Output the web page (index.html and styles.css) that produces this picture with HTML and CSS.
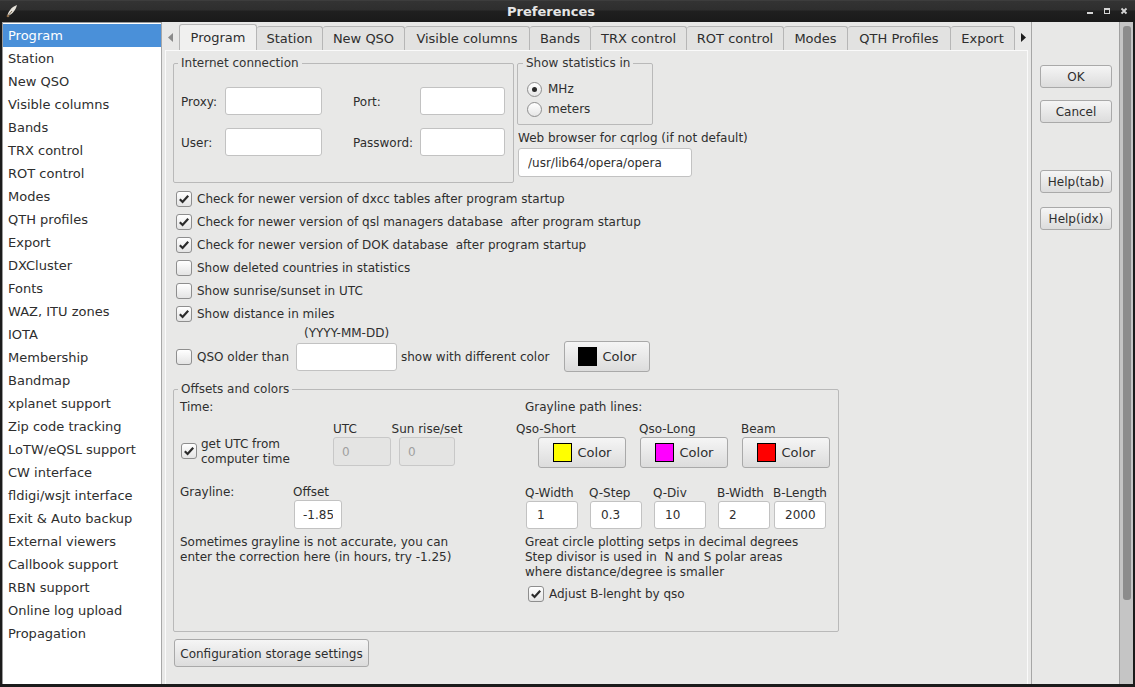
FILE: index.html
```html
<!DOCTYPE html>
<html>
<head>
<meta charset="utf-8">
<title>Preferences</title>
<link rel="stylesheet" href="styles.css">
</head>
<body>
<div class="window">
  <div class="titlebar">
    <div class="tb-icon">
      <svg width="16" height="16" viewBox="0 0 16 16"><path d="M3 14 C4 9 7 4 13 2 C12 6 9 11 4 13 Z" fill="#e6e2da"/><path d="M3 14 L8 8" stroke="#7a6a55" stroke-width="1"/><circle cx="4" cy="13" r="1.3" fill="#8b6b4a"/></svg>
    </div>
    <div class="tb-title">Preferences</div>
    <svg class="tb-controls" width="55" height="22" viewBox="0 0 55 22">
      <rect x="7" y="12" width="6" height="2" fill="#d4d4d4"/>
      <rect x="24.5" y="8.5" width="5" height="5" fill="none" stroke="#d4d4d4" stroke-width="1"/>
      <rect x="24" y="8" width="6" height="2" fill="#d4d4d4"/>
      <path d="M41.5 8.5 L46.5 13.5 M46.5 8.5 L41.5 13.5" stroke="#d4d4d4" stroke-width="1.8"/>
    </svg>
  </div>
  <div class="client">
    <ul class="sidebar">
      <li class="sel">Program</li>
      <li>Station</li>
      <li>New QSO</li>
      <li>Visible columns</li>
      <li>Bands</li>
      <li>TRX control</li>
      <li>ROT control</li>
      <li>Modes</li>
      <li>QTH profiles</li>
      <li>Export</li>
      <li>DXCluster</li>
      <li>Fonts</li>
      <li>WAZ, ITU zones</li>
      <li>IOTA</li>
      <li>Membership</li>
      <li>Bandmap</li>
      <li>xplanet support</li>
      <li>Zip code tracking</li>
      <li>LoTW/eQSL support</li>
      <li>CW interface</li>
      <li>fldigi/wsjt interface</li>
      <li>Exit &amp; Auto backup</li>
      <li>External viewers</li>
      <li>Callbook support</li>
      <li>RBN support</li>
      <li>Online log upload</li>
      <li>Propagation</li>
    </ul>
    <div class="main">
      <div class="tabbar">
        <div class="tab-arrow left"><svg width="5" height="9" viewBox="0 0 5 9"><path d="M5 0 L0 4.5 L5 9 Z" fill="#8a8a8a"/></svg></div>
        <div class="tabs">
          <div class="tab active">Program</div>
          <div class="tab">Station</div>
          <div class="tab">New QSO</div>
          <div class="tab">Visible columns</div>
          <div class="tab">Bands</div>
          <div class="tab">TRX control</div>
          <div class="tab">ROT control</div>
          <div class="tab">Modes</div>
          <div class="tab">QTH Profiles</div>
          <div class="tab">Export</div>
        </div>
        <div class="tab-arrow right"><svg width="5" height="9" viewBox="0 0 5 9"><path d="M0 0 L5 4.5 L0 9 Z" fill="#1e1e1e"/></svg></div>
      </div>
      <div class="panel">
        <div class="row-top">
          <fieldset class="group g-inet">
            <legend>Internet connection</legend>
            <div class="inet-grid">
              <span class="lbl">Proxy:</span><input class="field" type="text">
              <span class="lbl c4">Port:</span><input class="field" type="text">
              <span class="lbl">User:</span><input class="field" type="text">
              <span class="lbl c4">Password:</span><input class="field" type="text">
            </div>
          </fieldset>
          <div class="col-stats">
            <fieldset class="group g-stats">
              <legend>Show statistics in</legend>
              <div class="radio-row"><span class="radio on"></span>MHz</div>
              <div class="radio-row"><span class="radio"></span>meters</div>
            </fieldset>
            <div class="browser-lbl">Web browser for cqrlog (if not default)</div>
            <input class="field browser" type="text" value="/usr/lib64/opera/opera">
          </div>
        </div>

        <div class="checks">
          <div class="chk-row"><span class="chk on"><svg width="16" height="16" viewBox="0 0 16 16"><path d="M3.8 8.2 L6.6 11 L12.2 4.8" fill="none" stroke="#2b2b2b" stroke-width="2.2"/></svg></span>Check for newer version of dxcc tables after program startup</div>
          <div class="chk-row"><span class="chk on"><svg width="16" height="16" viewBox="0 0 16 16"><path d="M3.8 8.2 L6.6 11 L12.2 4.8" fill="none" stroke="#2b2b2b" stroke-width="2.2"/></svg></span>Check for newer version of qsl managers database&nbsp; after program startup</div>
          <div class="chk-row"><span class="chk on"><svg width="16" height="16" viewBox="0 0 16 16"><path d="M3.8 8.2 L6.6 11 L12.2 4.8" fill="none" stroke="#2b2b2b" stroke-width="2.2"/></svg></span>Check for newer version of DOK database&nbsp; after program startup</div>
          <div class="chk-row"><span class="chk"></span>Show deleted countries in statistics</div>
          <div class="chk-row"><span class="chk"></span>Show sunrise/sunset in UTC</div>
          <div class="chk-row"><span class="chk on"><svg width="16" height="16" viewBox="0 0 16 16"><path d="M3.8 8.2 L6.6 11 L12.2 4.8" fill="none" stroke="#2b2b2b" stroke-width="2.2"/></svg></span>Show distance in miles</div>
        </div>

        <div class="date-lbl">(YYYY-MM-DD)</div>
        <div class="qso-row">
          <span class="chk"></span>
          <span class="qso-txt">QSO older than</span>
          <input class="field qso-date" type="text">
          <span class="qso-txt2">show with different color</span>
          <div class="btn color-btn big"><span class="sw black"></span>Color</div>
        </div>

        <fieldset class="group g-offsets">
          <legend>Offsets and colors</legend>
          <div class="off-inner">
            <div class="off-left">
              <div class="line">Time:</div>
              <div class="time-row">
                <div class="utc-chk">
                  <span class="chk on"><svg width="16" height="16" viewBox="0 0 16 16"><path d="M3.8 8.2 L6.6 11 L12.2 4.8" fill="none" stroke="#2b2b2b" stroke-width="2.2"/></svg></span>
                  <div class="two-line">get UTC from<br>computer time</div>
                </div>
                <div class="col utc-col">
                  <div class="line">UTC</div>
                  <input class="field dis" type="text" value="0">
                </div>
                <div class="col sun-col">
                  <div class="line">Sun rise/set</div>
                  <input class="field dis" type="text" value="0">
                </div>
              </div>
              <div class="gray-row">
                <div class="line gray-lbl">Grayline:</div>
                <div class="col off-col">
                  <div class="line">Offset</div>
                  <input class="field" type="text" value="-1.85">
                </div>
              </div>
              <div class="note">Sometimes grayline is not accurate, you can<br>enter the correction here (in hours, try -1.25)</div>
            </div>
            <div class="off-right">
              <div class="line gpl">Grayline path lines:</div>
              <div class="color-row">
                <div class="col cr1">
                  <div class="line">Qso-Short</div>
                  <div class="btn color-btn"><span class="sw yellow"></span>Color</div>
                </div>
                <div class="col cr2">
                  <div class="line">Qso-Long</div>
                  <div class="btn color-btn"><span class="sw magenta"></span>Color</div>
                </div>
                <div class="col cr3">
                  <div class="line">Beam</div>
                  <div class="btn color-btn"><span class="sw red"></span>Color</div>
                </div>
              </div>
              <div class="q-row">
                <div class="col qc"><div class="line">Q-Width</div><input class="field q" type="text" value="1"></div>
                <div class="col qc"><div class="line">Q-Step</div><input class="field q" type="text" value="0.3"></div>
                <div class="col qc"><div class="line">Q-Div</div><input class="field q" type="text" value="10"></div>
                <div class="col qc narrow"><div class="line">B-Width</div><input class="field q" type="text" value="2"></div>
                <div class="col qc"><div class="line">B-Length</div><input class="field q" type="text" value="2000"></div>
              </div>
              <div class="note r-note">Great circle plotting setps in decimal degrees<br>Step divisor is used in&nbsp; N and S polar areas<br>where distance/degree is smaller</div>
              <div class="adj-row"><span class="chk on"><svg width="16" height="16" viewBox="0 0 16 16"><path d="M3.8 8.2 L6.6 11 L12.2 4.8" fill="none" stroke="#2b2b2b" stroke-width="2.2"/></svg></span>Adjust B-lenght by qso</div>
            </div>
          </div>
        </fieldset>

        <div class="btn cfg-btn">Configuration storage settings</div>
      </div>
    </div>
    <div class="actions">
      <div class="btn act">OK</div>
      <div class="btn act cancel">Cancel</div>
      <div class="btn act help1">Help(tab)</div>
      <div class="btn act help2">Help(idx)</div>
    </div>
    <div class="scroll"><div class="thumb"></div></div>
  </div>
</div>
</body>
</html>
```

FILE: styles.css
```css
* { box-sizing: border-box; }

body {
  margin: 0;
  background: #1b1b1b;
  font-family: "DejaVu Sans", "Liberation Sans", sans-serif;
  font-size: 12px;
  color: #2e2e2e;
}

.window {
  width: 1135px;
  height: 687px;
  display: flex;
  flex-direction: column;
  overflow: hidden;
}

/* title bar */
.titlebar {
  height: 22px;
  display: flex;
  align-items: center;
  background: linear-gradient(#474747 0, #333 1px, #2e2e2e 10px, #1f1f1f 11px, #1a1a1a 22px);
  color: #e6e6e6;
}
.tb-icon { width: 22px; padding-left: 4px; display: flex; align-items: center; }
.tb-title { flex: 1; text-align: center; font-weight: bold; font-size: 13px; }
.tb-controls { display: block; }

/* client */
.client {
  height: 662px;
  margin: 0 2px;
  display: flex;
}

.sidebar {
  width: 160px;
  margin: 0;
  padding: 1px 0 0;
  list-style: none;
  background: #fff;
  border-left: 1px solid #9a9a9a;
  border-top: 1px solid #9a9a9a;
  border-right: 1px solid #a8a8a8;
  font-size: 13px;
}
.sidebar li {
  height: 23px;
  line-height: 23px;
  padding-left: 5px;
  white-space: nowrap;
}
.sidebar li.sel { background: #4a90d9; color: #fff; }

.main {
  width: 869px;
  display: flex;
  flex-direction: column;
  padding-left: 1px;
  background: #e8e8e7;
}

.tabbar {
  height: 28px;
  padding-top: 2px;
  display: flex;
  align-items: flex-end;
  font-size: 13px;
}
.tab-arrow {
  width: 16px;
  height: 26px;
  display: flex;
  align-items: center;
}
.tab-arrow.left { padding-left: 5px; }
.tab-arrow.right { padding-left: 6px; }
.tab-arrow svg { display: block; }

.tabs {
  display: grid;
  grid-template-columns: 78px 66px 82px 125px 61px 96px 97px 64px 103px 64px;
  align-items: end;
}
.tab {
  height: 24px;
  line-height: 23px;
  text-align: center;
  white-space: nowrap;
  background: #e2e2e1;
  border-top: 1px solid #b6b6b6;
  border-right: 1px solid #b6b6b6;
  border-radius: 3px 3px 0 0;
}
.tab.active {
  height: 26px;
  line-height: 25px;
  background: #f0f0ef;
  border-left: 1px solid #b6b6b6;
}

.panel {
  flex: 1;
  margin: 0 3px 0 2px;
  border: 1px solid #fafafa;
  border-bottom: none;
  padding: 5px 0 0 7px;
  display: flex;
  flex-direction: column;
  align-items: flex-start;
}

/* groups */
.group {
  margin: 0;
  border: 1px solid #b9b9b9;
  border-radius: 2px;
  min-width: 0;
}
.group legend {
  line-height: 15px;
  padding: 0 3px;
  margin-left: -3px;
  color: #333;
}

.row-top {
  display: flex;
  gap: 3px;
  align-items: flex-start;
}
.g-inet {
  width: 341px;
  padding: 16px 7px 26px 7px;
}
.inet-grid {
  display: grid;
  grid-template-columns: 44px 97px 31px 67px 85px;
  grid-template-rows: 28px 28px;
  row-gap: 13px;
  align-items: center;
}
.inet-grid .c4 { grid-column: 4; }
.inet-grid .lbl { padding-top: 1px; }

.field {
  height: 28px;
  background: #fff;
  border: 1px solid #c2c2c2;
  border-radius: 3px;
  font: inherit;
  color: #2e2e2e;
  padding: 0 8px;
  outline: none;
  margin: 0;
}
.field.dis {
  background: #e4e4e3;
  border-color: #c8c8c8;
  color: #a0a0a0;
}

.col-stats {
  width: 176px;
  display: flex;
  flex-direction: column;
}
.g-stats {
  width: 136px;
  padding: 8px 8px 5px 8px;
}
.radio-row {
  height: 20px;
  display: flex;
  align-items: center;
}
.radio {
  width: 15px;
  height: 15px;
  margin: 0 6px 0 1px;
  border: 1px solid #8e8e8e;
  border-radius: 50%;
  background: linear-gradient(#ffffff, #e6e6e6);
  display: flex;
  align-items: center;
  justify-content: center;
}
.radio.on::after {
  content: "";
  width: 5px;
  height: 5px;
  border-radius: 50%;
  background: #2b2b2b;
}
.browser-lbl {
  margin: 6px 0 0 1px;
  line-height: 15px;
  white-space: nowrap;
}
.field.browser {
  margin: 2px 0 0 1px;
  width: 174px;
  height: 29px;
  padding-left: 9px;
}

/* checkboxes */
.chk {
  width: 16px;
  height: 16px;
  flex: none;
  border: 1px solid #8e8e8e;
  border-radius: 3px;
  background: linear-gradient(#ffffff, #e4e4e4);
  position: relative;
}
.chk svg {
  position: absolute;
  left: -1px;
  top: -1px;
}

.checks {
  margin-top: 4px;
  display: flex;
  flex-direction: column;
}
.chk-row {
  height: 23px;
  display: flex;
  align-items: center;
  padding-left: 3px;
  white-space: nowrap;
}
.chk-row .chk { margin-right: 5px; }

.date-lbl {
  margin-left: 131px;
  line-height: 16px;
}
.qso-row {
  margin-top: 0;
  height: 31px;
  display: flex;
  align-items: center;
  padding-left: 3px;
}
.qso-row .chk { margin-right: 5px; }
.qso-txt { width: 99px; white-space: nowrap; }
.field.qso-date { width: 101px; }
.qso-txt2 { margin-left: 4px; width: 163px; white-space: nowrap; }

/* buttons */
.btn {
  display: flex;
  align-items: center;
  justify-content: center;
  border: 1px solid #a9a9a9;
  border-radius: 3px;
  background: linear-gradient(#f5f5f5, #dcdcdc);
  white-space: nowrap;
  color: #2e2e2e;
}
.color-btn {
  width: 88px;
  height: 31px;
  gap: 6px;
  font-size: 13px;
}
.color-btn.big { width: 86px; }
.sw {
  width: 19px;
  height: 19px;
  border: 1px solid #000;
}
.sw.black { background: #000; }
.sw.yellow { background: #ffff00; }
.sw.magenta { background: #ff00ff; }
.sw.red { background: #ff0000; }

/* offsets */
.g-offsets {
  margin-top: 10px;
  width: 666px;
  padding: 0;
}
.g-offsets legend { margin-left: 4px; }
.off-inner {
  height: 234px;
  display: flex;
}
.line { line-height: 15px; white-space: nowrap; }
.col { display: flex; flex-direction: column; }

.off-left {
  width: 342px;
  padding-left: 6px;
}
.off-left > .line { margin-top: 3px; }
.time-row {
  margin-top: 7px;
  display: flex;
  align-items: flex-end;
}
.utc-chk {
  width: 153px;
  height: 30px;
  display: flex;
  align-items: center;
}
.utc-chk .chk { margin-left: 1px; }
.two-line { margin-left: 4px; line-height: 15px; padding-top: 2px; }
.utc-col { width: 58px; }
.utc-col .field, .sun-col .field { width: 58px; height: 29px; }
.sun-col { width: 56px; margin-left: 8px; align-items: center; }
.sun-col .field { width: 56px; }

.gray-row {
  margin-top: 19px;
  display: flex;
}
.gray-lbl { width: 113px; }
.off-col .field { margin: 0 0 0 1px; width: 48px; height: 29px; }
.note { margin-top: 6px; line-height: 15px; white-space: nowrap; }

.off-right { flex: 1; }
.gpl { margin: 3px 0 0 9px; }
.color-row {
  margin-top: 7px;
  display: flex;
}
.cr1 { width: 123px; }
.cr1 .btn { margin-left: 22px; }
.cr2 { width: 102px; }
.cr2 .btn, .cr3 .btn { margin-left: 1px; }

.q-row {
  margin: 18px 0 0 9px;
  display: flex;
}
.qc { width: 64px; }
.qc.narrow { width: 56px; }
.field.q {
  margin: 0 0 0 1px;
  width: 52px;
  height: 28px;
  padding-left: 10px;
}
.r-note { margin-left: 9px; }
.adj-row {
  margin: 4px 0 0 12px;
  height: 20px;
  display: flex;
  align-items: center;
}
.adj-row .chk { margin-right: 5px; }

.cfg-btn {
  margin: 7px 0 0 1px;
  width: 195px;
  height: 28px;
  padding-top: 1px;
}

/* right action column */
.actions {
  width: 88px;
  border-left: 1px solid #a6a6a6;
  background: #e8e8e7;
  padding: 43px 0 0 8px;
  display: flex;
  flex-direction: column;
}
.btn.act { width: 72px; height: 23px; }
.btn.cancel { margin-top: 12px; }
.btn.help1 { margin-top: 47px; }
.btn.help2 { margin-top: 14px; }

.scroll {
  width: 14px;
  background: #c5c5c5;
  border-left: 1px solid #a0a0a0;
  padding: 4px 2px 0 3px;
}
.thumb {
  height: 574px;
  background: #8c8c8c;
  border-radius: 3px;
}
```
